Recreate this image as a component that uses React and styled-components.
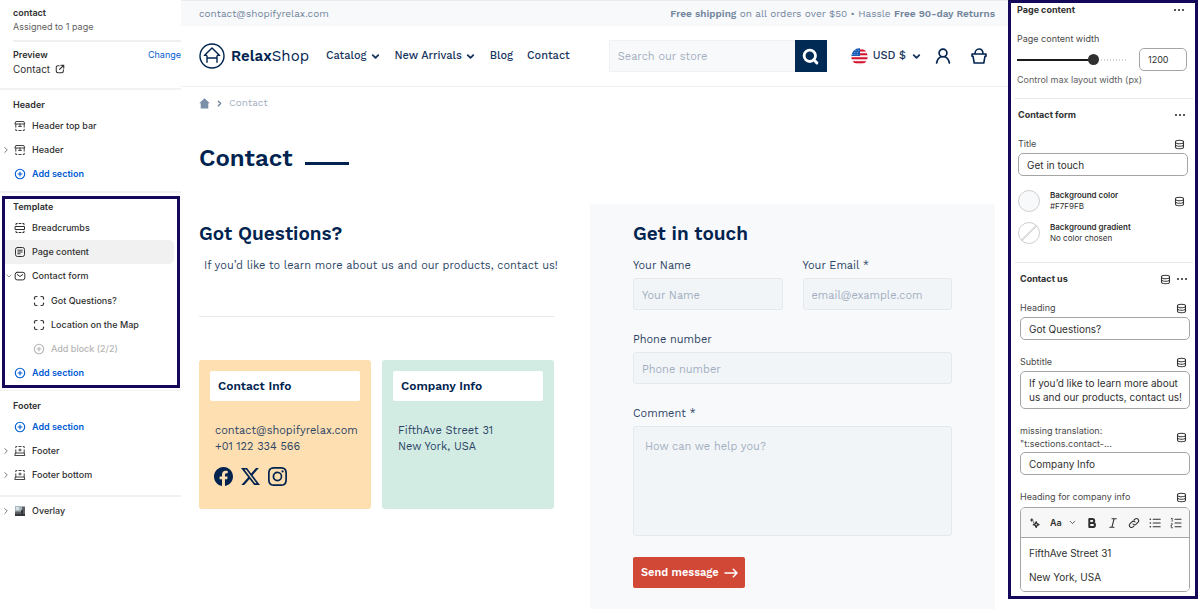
import React, { useState } from 'react';
import styled, { createGlobalStyle, css } from 'styled-components';
import { ChevronDown, ChevronRight, Search } from 'lucide-react';
import { BsFacebook, BsInstagram, BsTwitterX } from 'react-icons/bs';


export default function App() {
  return (
    <>
      <GlobalStyle />
      <Layout>
        <Sidebar />
        <Storefront />
        <Settings />
      </Layout>
    </>
  )
}

/* ---------- sidebar ---------- */

function Sidebar() {
  return (
    <SidebarWrapper>
      <PageInfo>
        <GroupTitle as="h1">contact</GroupTitle>
        <Muted>Assigned to 1 page</Muted>
      </PageInfo>
      <Preview>
        <div>
          <GroupTitle>Preview</GroupTitle>
          <PreviewLink href="#preview">Contact <ExternalIcon /></PreviewLink>
        </div>
        <ChangeLink href="#change">Change</ChangeLink>
      </Preview>

      <Group $bottom={5}>
        <GroupTitle>Header</GroupTitle>
        <Rows>
          <SectionRow icon={<HeaderIcon />} label="Header top bar" />
          <SectionRow icon={<HeaderIcon />} label="Header" chevron="right" />
          <SectionRow icon={<PlusIcon />} label="Add section" kind="add" />
        </Rows>
      </Group>

      <TemplateGroup>
        <GroupTitle>Template</GroupTitle>
        <Rows>
          <SectionRow inset icon={<SectionIcon />} label="Breadcrumbs" />
          <SectionRow inset icon={<PageIcon />} label="Page content" active />
          <SectionRow inset icon={<MailIcon />} label="Contact form" chevron="down" />
          <Blocks>
            <SectionRow inset icon={<BlockIcon />} label="Got Questions?" />
            <SectionRow inset icon={<BlockIcon />} label="Location on the Map" />
            <SectionRow inset icon={<PlusIcon />} label="Add block (2/2)" kind="disabled" />
          </Blocks>
          <SectionRow inset icon={<PlusIcon />} label="Add section" kind="add" />
        </Rows>
      </TemplateGroup>

      <Group $line $bottom={8}>
        <GroupTitle>Footer</GroupTitle>
        <Rows>
          <SectionRow icon={<PlusIcon />} label="Add section" kind="add" />
          <SectionRow icon={<FooterIcon />} label="Footer" chevron="right" />
          <SectionRow icon={<FooterIcon />} label="Footer bottom" chevron="right" />
        </Rows>
      </Group>
      <Rows>
        <SectionRow icon={<OverlayIcon />} label="Overlay" chevron="right" />
      </Rows>
    </SidebarWrapper>
  )
}

function SectionRow({ icon, label, chevron, kind, active, inset }) {
  return (
    <Row $kind={kind} $active={active} $inset={inset} disabled={kind === 'disabled'}>
      <Chevron>
        {chevron === 'right' && <ChevronRight size={10} strokeWidth={2} />}
        {chevron === 'down' && <ChevronDown size={8} strokeWidth={2} />}
      </Chevron>
      <RowIcon>{icon}</RowIcon>
      {label}
    </Row>
  )
}

/* ---------- storefront ---------- */

function Storefront() {
  return (
    <Store>
      <TopBar>
        <a href="mailto:contact@shopifyrelax.com">contact@shopifyrelax.com</a>
        <span><b>Free shipping</b> on all orders over $50 • Hassle <b>Free 90-day Returns</b></span>
      </TopBar>
      <StoreHeader>
        <Logo href="#home"><LogoIcon /><span><b>Relax</b>Shop</span></Logo>
        <Nav>
          <a href="#catalog">Catalog <ChevronDown size={11} strokeWidth={4} /></a>
          <a href="#new">New Arrivals <ChevronDown size={11} strokeWidth={4} /></a>
          <a href="#blog">Blog</a>
          <a href="#contact">Contact</a>
        </Nav>
        <SearchForm onSubmit={(e) => e.preventDefault()}>
          <input type="search" aria-label="Search our store" placeholder="Search our store" />
          <button type="submit" aria-label="Search"><SearchIcon /></button>
        </SearchForm>
        <Currency>
          <FlagIcon /> USD $ <ChevronDown size={11} strokeWidth={4} />
        </Currency>
        <IconButton aria-label="Account"><UserIcon /></IconButton>
        <IconButton aria-label="Cart"><BasketIcon /></IconButton>
      </StoreHeader>

      <Content>
        <Breadcrumbs aria-label="Breadcrumbs">
          <a href="#home" aria-label="Home"><HomeIcon /></a>
          <ChevronRight size={9} strokeWidth={4} />
          <span>Contact</span>
        </Breadcrumbs>
        <PageTitle>Contact</PageTitle>
        <Columns>
          <div>
            <SectionTitle>Got Questions?</SectionTitle>
            <Lead>If you’d like to learn more about us and our products, contact us!</Lead>
            <Divider />
            <Cards>
              <Card $color="#fddfb2">
                <h3>Contact Info</h3>
                <p>contact@shopifyrelax.com<br />+01 122 334 566</p>
                <Social>
                  <a href="#facebook" aria-label="Facebook"><BsFacebook /></a>
                  <a href="#x" aria-label="X"><BsTwitterX /></a>
                  <a href="#instagram" aria-label="Instagram"><BsInstagram /></a>
                </Social>
              </Card>
              <Card $color="#d2ece4">
                <h3>Company Info</h3>
                <p>FifthAve Street 31<br />New York, USA</p>
              </Card>
            </Cards>
          </div>
          <ContactForm onSubmit={(e) => e.preventDefault()}>
            <SectionTitle>Get in touch</SectionTitle>
            <FieldGrid>
              <Field>
                <label htmlFor="name">Your Name</label>
                <input id="name" placeholder="Your Name" />
              </Field>
              <Field>
                <label htmlFor="email">Your Email *</label>
                <input id="email" type="email" placeholder="email@example.com" />
              </Field>
              <Field $wide>
                <label htmlFor="phone">Phone number</label>
                <input id="phone" type="tel" placeholder="Phone number" />
              </Field>
              <Field $wide>
                <label htmlFor="comment">Comment *</label>
                <textarea id="comment" placeholder="How can we help you?" />
              </Field>
            </FieldGrid>
            <SendButton type="submit">Send message <ArrowIcon /></SendButton>
          </ContactForm>
        </Columns>
      </Content>
    </Store>
  )
}

/* ---------- settings ---------- */

const MIN_WIDTH = 480
const MAX_WIDTH = 1500

function Settings() {
  const [width, setWidth] = useState(1200)
  const percent = ((width - MIN_WIDTH) / (MAX_WIDTH - MIN_WIDTH)) * 100

  return (
    <Panel>
      <PanelSection $left={6} $right={8}>
        <PanelTitle>Page content <DotsButton /></PanelTitle>
        <PanelLabel htmlFor="width">Page content width</PanelLabel>
        <RangeRow>
          <Range
            id="width"
            type="range"
            min={MIN_WIDTH}
            max={MAX_WIDTH}
            step={20}
            value={width}
            onChange={(e) => setWidth(Number(e.target.value))}
            style={{ '--fill': `${percent}%` }}
          />
          <NumberInput
            aria-label="Page content width in pixels"
            value={width}
            onChange={(e) => setWidth(Number(e.target.value) || 0)}
          />
        </RangeRow>
        <Help>Control max layout width (px)</Help>
      </PanelSection>

      <PanelSection $left={7} $right={7} $line>
        <PanelTitle>Contact form <DotsButton /></PanelTitle>
        <PanelLabel htmlFor="title">Title <DataIcon /></PanelLabel>
        <PanelInput id="title" defaultValue="Get in touch" />
        <Colors>
          <ColorRow>
            <Swatch aria-label="Background color" />
            <div><b>Background color</b><br />#F7F9FB</div>
            <DataIcon />
          </ColorRow>
          <ColorRow>
            <Swatch aria-label="Background gradient" $empty />
            <div><b>Background gradient</b><br />No color chosen</div>
          </ColorRow>
        </Colors>
      </PanelSection>

      <PanelSection $left={9} $right={5} $line>
        <PanelTitle>Contact us <span><DataIcon /><DotsButton /></span></PanelTitle>
        <PanelLabel htmlFor="heading">Heading <DataIcon /></PanelLabel>
        <PanelInput id="heading" defaultValue="Got Questions?" />
        <PanelLabel $spaced htmlFor="subtitle">Subtitle <DataIcon /></PanelLabel>
        <PanelTextarea id="subtitle" rows={2} defaultValue="If you’d like to learn more about us and our products, contact us!" />
        <PanelLabel $spaced htmlFor="company">
          <span>missing translation:<br />"t:sections.contact-...</span> <DataIcon />
        </PanelLabel>
        <PanelInput id="company" defaultValue="Company Info" />
        <PanelLabel $spaced htmlFor="address">Heading for company info <DataIcon /></PanelLabel>
        <Editor>
          <EditorToolbar>
            <button type="button" aria-label="Generate"><SparkIcon /></button>
            <button type="button">Aa <ChevronDown size={9} strokeWidth={2} /></button>
            <button type="button" aria-label="Bold"><BoldIcon /></button>
            <button type="button" aria-label="Italic"><ItalicIcon /></button>
            <button type="button" aria-label="Link"><LinkIcon /></button>
            <button type="button" aria-label="Bulleted list"><BulletsIcon /></button>
            <button type="button" aria-label="Numbered list"><NumbersIcon /></button>
          </EditorToolbar>
          <EditorText id="address" rows={3} defaultValue={'FifthAve Street 31\n\nNew York, USA'} />
        </Editor>
      </PanelSection>
    </Panel>
  )
}

function DotsButton() {
  return (
    <MoreButton aria-label="More actions">
      <svg width="12" height="4" viewBox="0 0 12 4" fill="currentColor">
        <circle cx="2" cy="2" r="1.1" /><circle cx="6" cy="2" r="1.1" /><circle cx="10" cy="2" r="1.1" />
      </svg>
    </MoreButton>
  )
}

/* ---------- icons ---------- */

const Icon = ({ size = 12, children, ...props }) => (
  <svg width={size} height={size} viewBox="0 0 12 12" fill="none" stroke="currentColor" strokeWidth="1" strokeLinecap="round" strokeLinejoin="round" aria-hidden="true" {...props}>
    {children}
  </svg>
)

const ExternalIcon = () => (
  <Icon size={10} strokeWidth="1.3"><path d="M5 2H3.5A2 2 0 0 0 1.5 4v4.5a2 2 0 0 0 2 2H8a2 2 0 0 0 2-2V7M7 1.5h3.5V5M10.5 1.5 5.5 6.5" /></Icon>
)

const HeaderIcon = () => (
  <Icon strokeWidth=".9"><path d="M2.2 1.5h7.6l1 2.5H1.2zM1.8 4v3.2M10.2 4v3.2M6 4v2.6M4.6 6.4h2.8M1.8 9.3v1.2h1M10.2 9.3v1.2h-1M4.8 10.5h2.4" /></Icon>
)

const FooterIcon = () => (
  <Icon strokeWidth=".9"><path d="M1.8 8h8.4l.6 2.5H1.2zM1.8 2.7V1.5h1M10.2 2.7V1.5h-1M4.8 1.5h2.4M1.8 4.8V8M10.2 4.8V8M6 4v2M4.8 5h2.4" /></Icon>
)

const SectionIcon = () => (
  <Icon><path d="M1.5 4.5h9v3h-9zM2 2.8V1.5h1.2M10 2.8V1.5H8.8M5 1.5h2M2 9.2v1.3h1.2M10 9.2v1.3H8.8M5 10.5h2" /></Icon>
)

const PageIcon = () => (
  <Icon><rect x="1.5" y="1.5" width="9" height="9" rx="2" /><path d="M3.8 4.2h4.4M3.8 6h4.4M3.8 7.8H6" /></Icon>
)

const MailIcon = () => (
  <Icon><rect x="1.2" y="2.3" width="9.6" height="7.6" rx="2" /><path d="M3.2 4.5 6 6.5l2.8-2" /></Icon>
)

const BlockIcon = () => (
  <Icon><path d="M1.5 4V3A1.5 1.5 0 0 1 3 1.5h1M8 1.5h1A1.5 1.5 0 0 1 10.5 3v1M10.5 8v1A1.5 1.5 0 0 1 9 10.5H8M4 10.5H3A1.5 1.5 0 0 1 1.5 9V8" strokeWidth="1.2" /></Icon>
)

const PlusIcon = () => (
  <Icon strokeWidth="1.1"><circle cx="6" cy="6" r="4.7" /><path d="M6 4v4M4 6h4" /></Icon>
)

const OverlayIcon = () => (
  <Icon stroke="none">
    <path fill="#a9b6bd" d="M1 1h10v10H1z" />
    <path fill="#5b5f63" d="M1 6.5h6v3H1zM8 2h3v7H8z" />
    <path fill="#34383c" d="M1 9h10v2H1zM7 5h2v4H7z" />
    <path fill="#d9e0e3" d="M2 2h3v3H2z" />
  </Icon>
)

const DataIcon = () => (
  <Icon size={11} strokeWidth="1.1" color="#303030"><ellipse cx="6" cy="3.2" rx="4.4" ry="1.9" /><path d="M1.6 3.2v5.6c0 1.1 2 1.9 4.4 1.9s4.4-.8 4.4-1.9V3.2M1.6 6c0 1.1 2 1.9 4.4 1.9s4.4-.8 4.4-1.9" /></Icon>
)

const LogoIcon = () => (
  <svg width="26" height="26" viewBox="0 0 26 26" fill="none" stroke="#00234f" strokeWidth="1.4" aria-hidden="true">
    <circle cx="13" cy="13" r="12" />
    <path d="M8 12.4H5.4L13 5l7.6 7.4H18M8 12.4v7.4M18 12.4v7.4M8 15h10" strokeLinejoin="round" />
  </svg>
)

const SearchIcon = () => <Search size={17} strokeWidth={4} absoluteStrokeWidth={false} />

const HomeIcon = () => (
  <svg width="11" height="11" viewBox="0 0 11 11" fill="#7a8fa8" aria-hidden="true">
    <path d="M5.5.3 10.8 5.3H9.3v5.2H1.7V5.3H.2z" />
  </svg>
)

const FlagIcon = () => (
  <svg width="17" height="17" viewBox="0 0 17 17" aria-hidden="true">
    <clipPath id="flag"><circle cx="8.5" cy="8.5" r="8.3" /></clipPath>
    <g clipPath="url(#flag)">
      <path fill="#f3f3f5" d="M0 0h17v17H0z" />
      <path stroke="#d8102b" strokeWidth="2" d="M8 2.5h9M8 6.3h9M0 10.3h17M0 14.2h17" />
      <path fill="#1a5cb5" d="M0 0h9v8H0z" />
      <path stroke="#a9c6ea" strokeWidth=".8" strokeDasharray=".9 1.5" d="M2 2.5h6M1 4.5h7M1 6.5h7" />
    </g>
  </svg>
)

const UserIcon = () => (
  <svg width="16" height="16" viewBox="0 0 16 16" fill="none" stroke="#00234f" strokeWidth="1.7" strokeLinecap="round" aria-hidden="true">
    <circle cx="8" cy="5" r="3.9" /><path d="M1.6 15c.6-3.2 2.3-5.4 4.6-6.2M14.4 15c-.6-3.2-2.3-5.4-4.6-6.2" />
  </svg>
)

const BasketIcon = () => (
  <svg width="16" height="16" viewBox="0 0 16 16" fill="none" stroke="#00234f" strokeWidth="1.6" strokeLinejoin="round" aria-hidden="true">
    <path d="M1 6h14v2.2h-1L12.8 15H3.2L2 8.2H1zM4 6c0-3 1.6-5 4-5s4 2 4 5" />
  </svg>
)

const ArrowIcon = () => (
  <svg width="14" height="10" viewBox="0 0 14 10" fill="none" stroke="currentColor" strokeWidth="1.5" strokeLinecap="round" strokeLinejoin="round" aria-hidden="true">
    <path d="M1 5h12M9.3 1.3 13 5 9.3 8.7" />
  </svg>
)

const SparkIcon = () => (
  <Icon><path d="M7.2 4.8 8 6.7 10 7.6 8 8.4 7.2 10.4 6.3 8.4 4.3 7.6 6.3 6.7z" strokeWidth="1.3" /><path d="M2.8 1.8v2.4M1.6 3H4M4.6 5.2h.1" strokeWidth="1.2" /></Icon>
)

const BoldIcon = () => (
  <Icon strokeWidth="2"><path d="M3.3 2h3a1.9 1.9 0 0 1 0 3.9h-3zM3.3 5.9h3.6a2.1 2.1 0 0 1 0 4.2H3.3z" /></Icon>
)

const ItalicIcon = () => (
  <Icon strokeWidth="1.1"><path d="M5 1.8h4.2M2.8 10.2H7M7.1 1.8 4.9 10.2" /></Icon>
)

const LinkIcon = () => (
  <Icon strokeWidth="1.1"><path d="M5 7a2.2 2.2 0 0 0 3.1.2l2-2A2.2 2.2 0 0 0 7 2.1l-.8.8M7 5a2.2 2.2 0 0 0-3.1-.2l-2 2A2.2 2.2 0 0 0 5 9.9l.8-.8" /></Icon>
)

const BulletsIcon = () => (
  <Icon strokeWidth="1.1"><path d="M4.2 2.3h7M4.2 6h7M4.2 9.7h7" /><path d="M1.3 2.3h.1M1.3 6h.1M1.3 9.7h.1" strokeWidth="1.6" /></Icon>
)

const NumbersIcon = () => (
  <Icon strokeWidth="1.1"><path d="M5 2.3h6M5 6h6M5 9.7h6" /><path d="M1.2 1.7 2.2 1v3.4M1.2 6.8c1.6-1 1.8.4 0 1.7v.1M1.2 8.6 1.3 10.8h1.2" strokeWidth=".8" /></Icon>
)

/* ---------- styles ---------- */

const storeFont = '"Work Sans", Inter, "Open Sans", sans-serif'
const frame = '3px solid #14085a'

const GlobalStyle = createGlobalStyle`
  *, *::before, *::after {
    box-sizing: border-box;
  }

  body {
    margin: 0;
    background: #fff;
    font-family: Inter, "Liberation Sans", sans-serif;
    font-size: 9px;
    line-height: 14px;
    color: #303030;
  }

  h1, h2, h3, p {
    margin: 0;
  }

  a {
    color: inherit;
    text-decoration: none;
  }

  button, input, textarea {
    font: inherit;
    color: inherit;
    margin: 0;
    border-radius: 0;
  }

  button {
    padding: 0;
    border: 0;
    background: none;
    cursor: pointer;
  }

  svg {
    flex: none;
  }
`

const Layout = styled.div`
  display: grid;
  grid-template-columns: 181px minmax(0, 1fr) 192px;
  align-items: start;
`

const SidebarWrapper = styled.aside`
  min-width: 0;
`

const GroupTitle = styled.h2`
  padding-left: 13px;
  font-size: 9px;
  line-height: 14px;
  font-weight: 600;
`

const Muted = styled.p`
  padding-left: 13px;
  color: #616161;
`

const PageInfo = styled.div`
  padding: 6px 0;

  &::after {
    content: "";
    display: block;
    height: 2px;
    margin: 6px 0 -6px 13px;
    background: #f0f0f0;
  }
`

const Preview = styled.div`
  display: flex;
  justify-content: space-between;
  padding: 6px 0 12px;
  border-bottom: 2px solid #f2f2f2;
`

const PreviewLink = styled.a`
  display: flex;
  align-items: center;
  gap: 5px;
  padding-left: 13px;
  font-size: 10px;
`

const ChangeLink = styled.a`
  white-space: nowrap;
  color: #005bd3;
`

const Group = styled.section`
  margin-top: ${(p) => (p.$line ? 2 : 0)}px;
  padding: 8px 0 ${(p) => p.$bottom}px;
  border-top: ${(p) => (p.$line ? '1px solid #f2f2f2' : 'none')};
  border-bottom: 2px solid #f2f2f2;
`

const TemplateGroup = styled.section`
  margin: 3px 1px 0 2px;
  padding-top: 1px;
  border: ${frame};

  ${GroupTitle} {
    padding-left: 8px;
  }
`

const Rows = styled.div`
  padding-top: 2px;
`

const Blocks = styled.div`
  padding: 1px 0 0 19px;
`

const Row = styled.button`
  display: grid;
  grid-template-columns: ${(p) => (p.$inset ? 7 : 12)}px 20px auto;
  justify-content: start;
  align-items: center;
  width: calc(100% - 3px);
  height: 24px;
  border-radius: 0 5px 5px 0;
  font-weight: 500;
  text-align: left;
  white-space: nowrap;
  background: ${(p) => (p.$active ? '#f1f1f1' : 'none')};

  ${(p) => p.$kind === 'add' && css`
    color: #005bd3;
    font-weight: 600;
  `}

  ${(p) => p.$kind === 'disabled' && css`
    color: #b5b5b5;
    cursor: default;
  `}
`

const Chevron = styled.span`
  display: flex;
  justify-content: center;
  color: #616161;
`

const RowIcon = styled.span`
  display: flex;
  justify-content: center;
  width: 15px;
`

const Store = styled.main`
  font-family: ${storeFont};
  font-size: 11px;
  line-height: 16px;
  color: #2c4565;
`

const TopBar = styled.div`
  display: flex;
  justify-content: space-between;
  padding: 5px 13px 4px 18px;
  border-top: 1px solid #ececee;
  background: #f8f9fb;
  font-size: 10px;
  color: #71859d;

  b {
    font-weight: 600;
  }
`

const StoreHeader = styled.header`
  display: flex;
  align-items: center;
  height: 61px;
  padding: 0 21px 0 18px;
  border-bottom: 1px solid #f0f2f5;
  color: #17345c;
`

const Logo = styled.a`
  display: flex;
  align-items: center;
  gap: 6px;
  margin-right: 17px;
  font-size: 15px;
  line-height: 20px;
  color: #00234f;

  b {
    font-weight: 600;
  }
`

const Nav = styled.nav`
  display: flex;
  gap: 14px;
  font-weight: 500;
  white-space: nowrap;

  a {
    display: flex;
    align-items: center;
    gap: 3px;
  }
`

const SearchForm = styled.form`
  display: flex;
  flex: 0 1 218px;
  min-width: 0;
  height: 32px;
  margin-left: auto;

  input {
    flex: 1;
    min-width: 0;
    padding: 2px 8px 0;
    border: 1px solid #eff2f6;
    border-right: 0;
    background: #f8f9fb;
    appearance: none;
    outline: 0;
  }

  input::placeholder {
    color: #a3afc0;
  }

  button {
    display: flex;
    align-items: center;
    justify-content: center;
    width: 32px;
    background: #002a54;
    color: #fff;
  }
`

const Currency = styled.button`
  display: flex;
  align-items: center;
  gap: 5px;
  margin-left: 24px;
  font-weight: 500;
  white-space: nowrap;
`

const IconButton = styled.button`
  display: flex;
  margin-left: 13px;

  & + & {
    margin-left: 20px;
  }
`

const Content = styled.div`
  padding: 8px 13px 4px 18px;
`

const Breadcrumbs = styled.nav`
  display: flex;
  align-items: center;
  gap: 5px;
  font-size: 10px;
  color: #a3afc0;

  a {
    display: flex;
  }

  svg {
    color: #71859d;
  }
`

const PageTitle = styled.h1`
  display: flex;
  align-items: flex-end;
  gap: 12px;
  margin: 32px 0 31px;
  font-size: 24px;
  line-height: 30px;
  font-weight: 600;
  color: #00234f;

  &::after {
    content: "";
    width: 44px;
    height: 3px;
    margin-bottom: 8px;
    background: #00234f;
  }
`

const Columns = styled.div`
  display: grid;
  grid-template-columns: minmax(0, 355fr) minmax(0, 405fr);
  gap: 36px;
`

const SectionTitle = styled.h2`
  padding-top: 18px;
  margin-bottom: 12px;
  font-size: 19px;
  line-height: 24px;
  font-weight: 600;
  color: #00234f;
`

const Lead = styled.p`
  padding-left: 5px;
  white-space: nowrap;
`

const Divider = styled.hr`
  height: 1px;
  margin: 42px 0 43px;
  border: 0;
  background: #e6e8eb;
`

const Cards = styled.div`
  display: grid;
  grid-template-columns: 1fr 1fr;
  gap: 11px;
`

const Card = styled.article`
  padding: 11px 11px 23px;
  border-radius: 3px;
  background: ${(p) => p.$color};

  h3 {
    padding: 0 8px;
    border-radius: 2px;
    background: #fff;
    font-size: 12px;
    line-height: 30px;
    font-weight: 600;
    color: #00234f;
  }

  p {
    margin: 22px 0 12px;
    padding-left: 5px;
    white-space: nowrap;
  }
`

const Social = styled.div`
  display: flex;
  gap: 8px;
  padding-left: 4px;
  font-size: 19px;
  color: #00234f;

  a {
    display: flex;
  }
`

const ContactForm = styled.form`
  padding: 0 43px 21px;
  background: #f8f9fb;
`

const FieldGrid = styled.div`
  display: grid;
  grid-template-columns: 1fr 1fr;
  gap: 22px 20px;
`

const Field = styled.div`
  display: grid;
  gap: 4px;
  min-width: 0;
  grid-column: ${(p) => (p.$wide ? '1 / -1' : 'auto')};

  input, textarea {
    display: block;
    width: 100%;
    height: 32px;
    padding: 2px 8px 0;
    border: 1px solid #e5e9ee;
    border-radius: 3px;
    background: #f1f5f8;
    outline: 0;
  }

  textarea {
    height: 110px;
    padding: 12px 11px;
    resize: none;
  }

  ::placeholder {
    color: #a3afc0;
  }
`

const SendButton = styled.button`
  display: flex;
  align-items: center;
  gap: 5px;
  height: 31px;
  margin-top: 21px;
  padding: 0 7px 0 8px;
  border-radius: 2px;
  background: #d14836;
  font-weight: 600;
  color: #fff;
`

const Panel = styled.aside`
  margin-right: 2px;
  border: ${frame};
`

const PanelSection = styled.section`
  padding: 0 ${(p) => p.$right}px 9px ${(p) => p.$left}px;

  &:last-child {
    padding-bottom: 4px;
  }

  ${(p) => p.$line && css`
    &::before {
      content: "";
      display: block;
      height: 1px;
      margin: 0 ${2 - p.$right}px 9px ${4 - p.$left}px;
      background: #e8e8e8;
    }
  `}
`

const PanelTitle = styled.h2`
  display: flex;
  align-items: center;
  justify-content: space-between;
  margin-bottom: 15px;
  font-size: 9px;
  line-height: 14px;
  font-weight: 700;

  span {
    display: flex;
    align-items: center;
    gap: 5px;
  }
`

const MoreButton = styled.button`
  display: flex;
  margin-right: 2px;
`

const PanelLabel = styled.label`
  display: flex;
  align-items: center;
  justify-content: space-between;
  margin: ${(p) => (p.$spaced ? 15 : 0)}px 0 2px;
  padding-right: 3px;
  color: #4a4a4a;

  span {
    line-height: 13px;
  }
`

const RangeRow = styled.div`
  display: flex;
  align-items: center;
  gap: 11px;
`

const Range = styled.input`
  flex: 1;
  min-width: 0;
  height: 12px;
  appearance: none;
  background:
    linear-gradient(#1a1a1a, #1a1a1a) 0 50% / var(--fill) 2px no-repeat,
    repeating-linear-gradient(90deg, #d0d0d0 0 1px, #fff 1px 3px) 0 50% / 100% 2px no-repeat;

  &::-webkit-slider-thumb {
    appearance: none;
    width: 11px;
    height: 11px;
    border-radius: 50%;
    background: #303030;
  }
`

const control = css`
  border: 1px solid #a5a5a5;
  border-radius: 5px;
  background: #fff;
  outline: 0;
`

const NumberInput = styled.input`
  ${control}
  width: 48px;
  height: 23px;
  padding: 0 8px;
`

const Help = styled.p`
  margin: 2px 0;
  color: #616161;
`

const PanelInput = styled.input`
  ${control}
  display: block;
  width: 100%;
  height: 23px;
  padding: 0 8px;
  font-size: 10px;
`

const PanelTextarea = styled.textarea`
  ${control}
  display: block;
  width: 100%;
  padding: 4px 2px 4px 8px;
  font-size: 10px;
  overflow: hidden;
  resize: none;
`

const Colors = styled.div`
  display: grid;
  gap: 10px;
  margin: 14px 3px 9px 0;
`

const ColorRow = styled.div`
  display: grid;
  grid-template-columns: 22px 1fr auto;
  align-items: center;
  gap: 10px;
  font-size: 8px;
  line-height: 11px;

  b {
    font-weight: 600;
  }
`

const Swatch = styled.button`
  width: 22px;
  height: 22px;
  border: 1px solid #cfcfcf;
  border-radius: 50%;
  background: ${(p) => (p.$empty
    ? 'linear-gradient(135deg, #fff 47%, #dedede 47% 53%, #fff 53%)'
    : '#f7f9fb')};
`

const Editor = styled.div`
  ${control}
  margin-top: 3px;
  overflow: hidden;
`

const EditorToolbar = styled.div`
  display: flex;
  align-items: center;
  justify-content: space-between;
  height: 30px;
  padding: 0 7px 0 8px;
  border-bottom: 1px solid #a5a5a5;
  background: #f7f7f7;

  button {
    display: flex;
    align-items: center;
    gap: 6px;
    font-weight: 600;
  }
`

const EditorText = styled.textarea`
  display: block;
  width: 100%;
  padding: 9px 8px 8px;
  border: 0;
  font-size: 10px;
  line-height: 12px;
  background: #fff;
  outline: 0;
  resize: none;
  overflow: hidden;
`
